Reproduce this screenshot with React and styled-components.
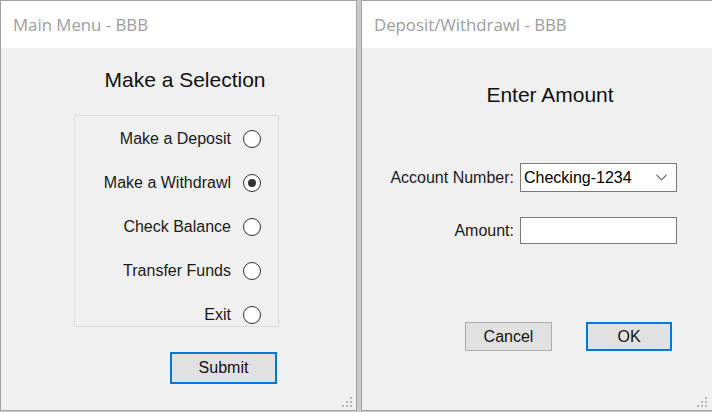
import React from 'react';
import styled, { createGlobalStyle } from 'styled-components';

const GlobalStyle = createGlobalStyle`
  html, body {
    margin: 0;
    padding: 0;
    overflow: hidden;
  }
  body {
    font-family: "Liberation Sans", Arial, sans-serif;
  }
`;

const Desktop = styled.div`
  display: flex;
  align-items: flex-start;
  gap: 4px;
  width: 712px;
  height: 412px;
  overflow: hidden;
  background: #c9c9c9;
`;

const Window = styled.div`
  position: relative;
  display: flex;
  flex-direction: column;
  flex-shrink: 0;
  width: ${(p) => p.$width}px;
  height: 411px;
  box-sizing: border-box;
  border: 1px solid #a3a3a3;
  background: #f0f0f0;
`;

const TitleBar = styled.div`
  display: flex;
  align-items: center;
  height: 47px;
  padding-left: 12px;
  background: #ffffff;
  color: #9d9d9d;
  font-family: "Open Sans", "Noto Sans", sans-serif;
  font-size: 16.8px;
`;

const Body = styled.div`
  flex: 1;
  display: flex;
  flex-direction: column;
  background: #f0f0f0;
  color: #1a1a1a;
  font-size: 16px;
`;

const Heading = styled.div`
  margin-top: ${(p) => p.$top}px;
  padding-left: ${(p) => p.$shift || 0}px;
  text-align: center;
  font-size: 21px;
  line-height: 24px;
  color: #111;
`;

const GroupBox = styled.div`
  display: flex;
  flex-direction: column;
  align-items: flex-end;
  gap: 27px;
  width: 205px;
  height: 212px;
  box-sizing: border-box;
  margin: 23px 0 0 73px;
  padding: 14px 17px 0 0;
  border: 1px solid #dcdcdc;
`;

const RadioRow = styled.label`
  display: flex;
  align-items: center;
  gap: 12px;
  height: 17px;
  line-height: 17px;
`;

const RadioCircle = styled.span`
  display: flex;
  align-items: center;
  justify-content: center;
  width: 18px;
  height: 18px;
  box-sizing: border-box;
  border: 1px solid #333;
  border-radius: 50%;
  background: #fff;

  &::after {
    content: '';
    display: ${(p) => (p.$checked ? 'block' : 'none')};
    width: 8px;
    height: 8px;
    border-radius: 50%;
    background: #333;
  }
`;

const Button = styled.button`
  width: ${(p) => p.$width}px;
  height: ${(p) => p.$height}px;
  box-sizing: border-box;
  padding: 0;
  border: ${(p) => (p.$focused ? '2px solid #0078d7' : '1px solid #adadad')};
  background: #e1e1e1;
  color: #111;
  font-family: "Liberation Sans", Arial, sans-serif;
  font-size: 16px;
`;

const SubmitRow = styled.div`
  margin: 25px 0 0 169px;
`;

const Form = styled.div`
  display: grid;
  grid-template-columns: 152px 157px;
  column-gap: 6px;
  row-gap: 25px;
  align-items: center;
  margin-top: 56px;
`;

const FieldLabel = styled.span`
  text-align: right;
`;

const Combo = styled.div`
  display: flex;
  align-items: center;
  justify-content: space-between;
  height: 29px;
  box-sizing: border-box;
  padding: 0 9px 0 3px;
  border: 1px solid #7a7a7a;
  background: #fff;
  color: #000;
`;

const TextBox = styled.div`
  height: 27px;
  box-sizing: border-box;
  border: 1px solid #7a7a7a;
  background: #fff;
`;

const ButtonRow = styled.div`
  display: flex;
  gap: 34px;
  margin: 78px 0 0 103px;
`;

const Grip = styled.svg`
  position: absolute;
  right: ${(p) => p.$right}px;
  bottom: 2px;
`;

const SizeGrip = ({ right = 3 }) => (
  <Grip $right={right} width="12" height="12" viewBox="0 0 12 12">
    {[[9, 1], [5, 5], [9, 5], [1, 9], [5, 9], [9, 9]].map(([x, y]) => (
      <rect key={`${x}-${y}`} x={x} y={y} width="2" height="2" fill="#b8b8b8" />
    ))}
  </Grip>
);

const Chevron = () => (
  <svg width="11" height="7" viewBox="0 0 11 7">
    <path d="M0.5 0.8 L5.5 5.8 L10.5 0.8" fill="none" stroke="#555" strokeWidth="1.1" />
  </svg>
);

const options = [
  { label: 'Make a Deposit', checked: false },
  { label: 'Make a Withdrawl', checked: true },
  { label: 'Check Balance', checked: false },
  { label: 'Transfer Funds', checked: false },
  { label: 'Exit', checked: false },
];

export default function App() {
  return (
    <>
      <GlobalStyle />
      <Desktop>
        <Window $width={357}>
          <TitleBar>Main Menu - BBB</TitleBar>
          <Body>
            <Heading $top={20} $shift={13}>Make a Selection</Heading>
            <GroupBox>
              {options.map((o) => (
                <RadioRow key={o.label}>
                  {o.label}
                  <RadioCircle $checked={o.checked} />
                </RadioRow>
              ))}
            </GroupBox>
            <SubmitRow>
              <Button $width={107} $height={32} $focused>Submit</Button>
            </SubmitRow>
          </Body>
          <SizeGrip />
        </Window>
        <Window $width={378}>
          <TitleBar>Deposit/Withdrawl - BBB</TitleBar>
          <Body>
            <Heading $top={35}>Enter Amount</Heading>
            <Form>
              <FieldLabel>Account Number:</FieldLabel>
              <Combo>
                Checking-1234
                <Chevron />
              </Combo>
              <FieldLabel>Amount:</FieldLabel>
              <TextBox />
            </Form>
            <ButtonRow>
              <Button $width={87} $height={29}>Cancel</Button>
              <Button $width={86} $height={29} $focused>OK</Button>
            </ButtonRow>
          </Body>
          <SizeGrip right={30} />
        </Window>
      </Desktop>
    </>
  );
}
